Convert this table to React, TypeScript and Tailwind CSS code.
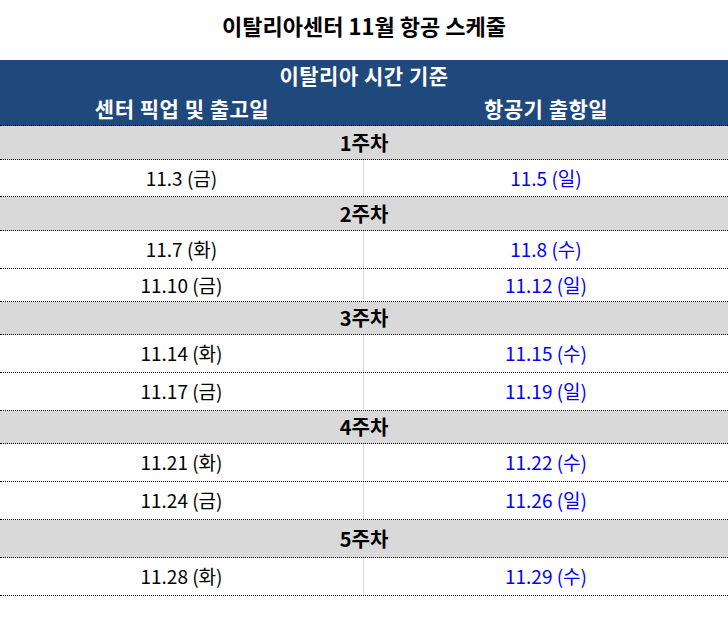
import React from 'react';

type Row =
  | { kind: 'week'; label: string; h: string }
  | { kind: 'date'; pickup: string; flight: string; h: string };

const rows: Row[] = [
  { kind: 'week', label: '1주차', h: 'h-[34px]' },
  { kind: 'date', pickup: '11.3 (금)', flight: '11.5 (일)', h: 'h-[37px]' },
  { kind: 'week', label: '2주차', h: 'h-[34px]' },
  { kind: 'date', pickup: '11.7 (화)', flight: '11.8 (수)', h: 'h-[38px]' },
  { kind: 'date', pickup: '11.10 (금)', flight: '11.12 (일)', h: 'h-[33px]' },
  { kind: 'week', label: '3주차', h: 'h-[33px]' },
  { kind: 'date', pickup: '11.14 (화)', flight: '11.15 (수)', h: 'h-[38px]' },
  { kind: 'date', pickup: '11.17 (금)', flight: '11.19 (일)', h: 'h-[38px]' },
  { kind: 'week', label: '4주차', h: 'h-[33px]' },
  { kind: 'date', pickup: '11.21 (화)', flight: '11.22 (수)', h: 'h-[38px]' },
  { kind: 'date', pickup: '11.24 (금)', flight: '11.26 (일)', h: 'h-[38px]' },
  { kind: 'week', label: '5주차', h: 'h-[38px]' },
  { kind: 'date', pickup: '11.28 (화)', flight: '11.29 (수)', h: 'h-[38px]' },
];

const App: React.FC = () => {
  return (
    <div className="w-[728px] h-[628px] bg-white font-['Noto_Sans_CJK_KR',sans-serif] text-black">
      <h1 className="h-[60px] flex items-center justify-center text-[22px] font-bold pb-[10px]">
        이탈리아센터 11월 항공 스케줄
      </h1>

      {/* 헤더 */}
      <div className="h-[66px] bg-[#1f497d] text-white font-bold text-[21px] border-b border-dotted border-black">
        <div className="h-[32px] flex items-center justify-center tracking-[0.5px]">이탈리아 시간 기준</div>
        <div className="h-[33px] grid grid-cols-2 tracking-[0.5px]">
          <div className="flex items-center justify-center">센터 픽업 및 출고일</div>
          <div className="flex items-center justify-center">항공기 출항일</div>
        </div>
      </div>

      {rows.map((row, i) =>
        row.kind === 'week' ? (
          <div
            key={i}
            className={`${row.h} bg-[#d9d9d9] border-b border-dotted border-black flex items-center justify-center font-bold text-[20px]`}
          >
            {row.label}
          </div>
        ) : (
          <div key={i} className={`${row.h} grid grid-cols-2 border-b border-dotted border-black text-[19px]`}>
            <div className="flex items-center justify-center border-r border-[#d9d9d9]">{row.pickup}</div>
            <div className="flex items-center justify-center text-[#0000ff]">{row.flight}</div>
          </div>
        )
      )}
    </div>
  );
};

export default App;
